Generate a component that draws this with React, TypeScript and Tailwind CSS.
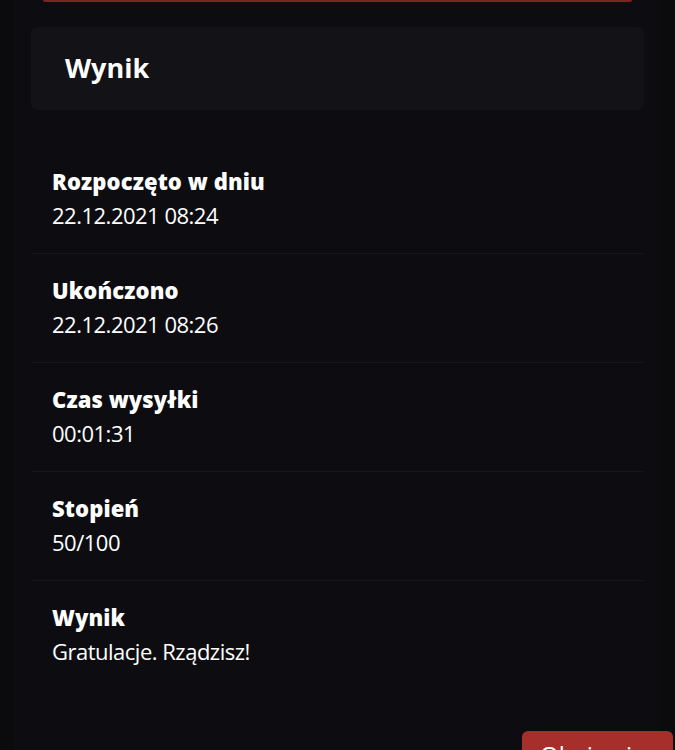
import React from "react";

const rows = [
  { label: "Rozpoczęto w dniu", value: "22.12.2021 08:24" },
  { label: "Ukończono", value: "22.12.2021 08:26" },
  { label: "Czas wysyłki", value: "00:01:31" },
  { label: "Stopień", value: "50/100" },
  { label: "Wynik", value: "Gratulacje. Rządzisz!" },
];

export default function App() {
  return (
    <div className="h-[750px] w-full overflow-hidden bg-[#0b0b0e]">
      <div className="mx-[15px] flex h-full flex-col bg-[#0d0d11]">
        <div className="mx-[28px] h-[2px] rounded-b-full bg-[#7a2424]" />
        <div className="px-[16px]">
          <div className="mt-[25px] flex h-[83px] items-center rounded-md bg-[#121217] pl-[34px]">
            <h2 className="text-[27px] font-bold text-white" style={{ fontFamily: '"Open Sans", sans-serif' }}>
              Wynik
            </h2>
          </div>
          <div className="mt-[35px] flex flex-col" style={{ fontFamily: '"Open Sans", sans-serif' }}>
            {rows.map((r, i) => (
              <div
                key={r.label}
                className={`px-[21px] pt-[19px] pb-[21px] ${i < rows.length - 1 ? "border-b border-[#16161b]" : ""}`}
              >
                <div className="text-[22px] font-extrabold leading-[34px] tracking-[0.1px] text-white">{r.label}</div>
                <div className="text-[22px] font-normal leading-[34px] tracking-[-0.5px] text-white">{r.value}</div>
              </div>
            ))}
          </div>
        </div>
        <div className="mt-auto flex justify-end">
          <button
            className="-mr-[13px] h-[19px] w-[151px] overflow-hidden rounded-t-md bg-[#a72f2b] pl-[18px] pt-[9px] text-left text-[24px] leading-[30px] text-white"
            style={{ fontFamily: '"Open Sans", sans-serif' }}
          >
            Obejrzyj
          </button>
        </div>
      </div>
    </div>
  );
}
